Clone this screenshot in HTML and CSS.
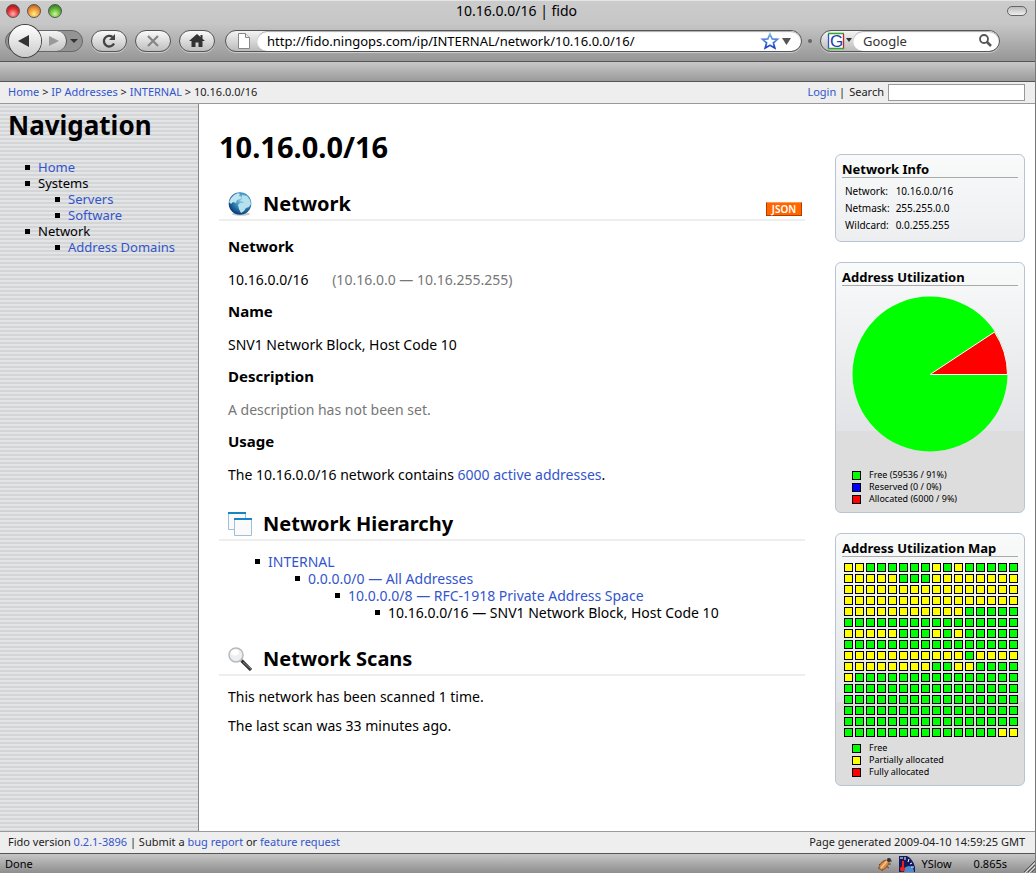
FILE: index.html
```html
<!DOCTYPE html>
<html lang="en">
<head>
<meta charset="utf-8">
<title>10.16.0.0/16 | fido</title>
<link rel="stylesheet" href="styles.css">
</head>
<body>
<div class="window">
  <header class="chrome">
    <div class="titlebar">
      <div class="lights">
        <button class="light red" aria-label="Close"></button>
        <button class="light amber" aria-label="Minimise"></button>
        <button class="light green" aria-label="Zoom"></button>
      </div>
      <span class="title">10.16.0.0/16 | fido</span>
      <div class="corner"><button class="pill" aria-label="Toggle toolbar"></button></div>
    </div>
    <div class="toolbar">
      <div class="history">
        <button class="back" aria-label="Back"><svg width="32" height="32" viewBox="0 0 32 32"><path d="M9 16 20 10V22Z" fill="#333"/></svg></button>
        <button class="forward" aria-label="Forward"><svg width="28" height="20" viewBox="0 0 28 20"><path d="M11 5V15L21 10Z" fill="#999"/></svg></button>
        <button class="recent" aria-label="Recent pages"><svg width="15" height="20" viewBox="0 0 15 20"><path d="M3 8H11L7 12Z" fill="#333"/></svg></button>
      </div>
      <button class="tool" aria-label="Reload"><svg width="34" height="20" viewBox="0 0 34 20"><path d="M22 12.500A5.300 5.300 0 1 1 20.500 6" fill="none" stroke="#444" stroke-width="2.300"/><path d="M23 3V9H17Z" fill="#444"/></svg></button>
      <button class="tool" aria-label="Stop"><svg width="34" height="20" viewBox="0 0 34 20"><path d="M12 5 22 15M22 5 12 15" fill="none" stroke="#858585" stroke-width="2.200"/></svg></button>
      <button class="tool" aria-label="Home page"><svg width="34" height="20" viewBox="0 0 34 20"><path d="M17 3 9 10H11.500V16H15.500V11.500H18.500V16H22.500V10H25L22.500 7.800V4H20.500V6Z" fill="#333"/></svg></button>
      <div class="address">
        <svg width="31" height="20" viewBox="0 0 31 20"><path d="M12.500 2.500H19.500L23.500 6.500V17.500H12.500Z" fill="#fff" stroke="#888"/><path d="M19.500 2.500V6.500H23.500" fill="#eee" stroke="#888"/></svg>
        <div class="field">
          <input aria-label="Address" value="http://fido.ningops.com/ip/INTERNAL/network/10.16.0.0/16/">
          <svg width="44" height="20" viewBox="0 0 44 20"><defs><linearGradient id="st" x2="0" y2="1"><stop stop-color="#7db4ec"/><stop offset="1" stop-color="#1742c8"/></linearGradient></defs><path d="M13 3 15.200 7.900 20.500 8.300 16.400 11.800 17.800 17 13 14.200 8.200 17 9.600 11.800 5.500 8.300 10.800 7.900Z" fill="#fff" stroke="url(#st)" stroke-width="1.700"/><path d="M25 7H34L29.500 14Z" fill="#555"/></svg>
        </div>
      </div>
      <span class="grip"></span>
      <div class="address search">
        <svg width="32" height="20" viewBox="0 0 32 20"><path d="M8 3H22V18H8Z" fill="#fff"/><path d="M7 2.500H23" stroke="#30a828" stroke-width="1.300"/><path d="M7.500 3V18" stroke="#2855d5" stroke-width="1.300"/><path d="M22.500 3V18" stroke="#c22" stroke-width="1.300"/><path d="M7 17.500H23" stroke="#30a828" stroke-width="1.300"/><text x="9" y="16" class="g-mark">G</text><path d="M25 7H31L28 11Z" fill="#333"/></svg>
        <div class="field">
          <input aria-label="Web search" value="Google">
          <svg width="24" height="20" viewBox="0 0 24 20"><circle cx="9" cy="8" r="4" fill="none" stroke="#555" stroke-width="1.800"/><path d="M12 11 16 15" stroke="#555" stroke-width="2.500"/></svg>
        </div>
      </div>
    </div>
    <div class="bookmarks"></div>
  </header>

  <div class="topbar">
    <nav class="crumbs"><a href="#">Home</a> &gt; <a href="#">IP Addresses</a> &gt; <a href="#">INTERNAL</a> &gt; 10.16.0.0/16</nav>
    <form class="find"><span><a href="#">Login</a> |</span><label for="q">Search</label><input id="q" type="text"></form>
  </div>

  <div class="body">
    <nav class="sidebar">
      <h1>Navigation</h1>
      <ul>
        <li><a href="#">Home</a></li>
        <li>Systems<ul><li><a href="#">Servers</a></li><li><a href="#">Software</a></li></ul></li>
        <li>Network<ul><li><a href="#">Address Domains</a></li></ul></li>
      </ul>
    </nav>

    <main>
      <h1>10.16.0.0/16</h1>
      <section>
        <div class="heading">
          <svg width="24" height="24" viewBox="0 0 24 24"><defs><radialGradient id="gl" cx=".6" cy=".35" r=".65"><stop stop-color="#9ed9ed"/><stop offset=".55" stop-color="#3488b8"/><stop offset="1" stop-color="#0b3e78"/></radialGradient></defs><ellipse cx="13" cy="22" rx="9" ry="1.800" fill="#ccc"/><circle cx="12" cy="11.500" r="11.300" fill="url(#gl)"/><path d="M3 6 6 3 10 1 12 2 11 4 14 5 12 7 9 8 8 11 5 10 3 12 1 10Z" fill="#bfe5ee"/><path d="M14 3 19 4 22 8 23 12 21 15 18 16 16 19 13 21 11 17 10 13 12 11 16 11 14 9 12 9 14 7Z" fill="#b5e1ed"/></svg>
          <h2>Network</h2>
          <a class="json" href="#">JSON</a>
        </div>
        <div class="facts">
          <h3>Network</h3>
          <p>10.16.0.0/16 <span class="range">(10.16.0.0 — 10.16.255.255)</span></p>
          <h3>Name</h3>
          <p>SNV1 Network Block, Host Code 10</p>
          <h3>Description</h3>
          <p class="muted">A description has not been set.</p>
          <h3>Usage</h3>
          <p>The 10.16.0.0/16 network contains <a href="#">6000 active addresses</a>.</p>
        </div>
      </section>
      <section>
        <div class="heading">
          <svg width="24" height="24" viewBox="0 0 24 24"><path d="M.5 1V17.500H17.500V1" fill="#fafafa" stroke="#9cc0dc"/><path d="M0 1H18" stroke="#1585c4" stroke-width="2"/><path d="M6.500 7V23.500H23.500V7" fill="#fafafa" stroke="#9cc0dc"/><path d="M6 7H24" stroke="#1585c4" stroke-width="2"/></svg>
          <h2>Network Hierarchy</h2>
        </div>
        <ul class="tree"><li><a href="#">INTERNAL</a>
          <ul><li><a href="#">0.0.0.0/0 — All Addresses</a>
            <ul><li><a href="#">10.0.0.0/8 — RFC-1918 Private Address Space</a>
              <ul><li>10.16.0.0/16 — SNV1 Network Block, Host Code 10</li></ul></li></ul></li></ul></li></ul>
      </section>
      <section>
        <div class="heading">
          <svg width="24" height="24" viewBox="0 0 24 24"><path d="M13.500 13.500 23 23" stroke="#333" stroke-width="3.200"/><path d="M15 15 23 22" stroke="#888"/><circle cx="8" cy="8" r="7" fill="#eceff1" stroke="#b9b9b9" stroke-width="1.500"/><ellipse cx="7" cy="5.500" rx="4" ry="3" fill="#fff"/></svg>
          <h2>Network Scans</h2>
        </div>
        <div class="scans">
          <p>This network has been scanned 1 time.</p>
          <p>The last scan was 33 minutes ago.</p>
        </div>
      </section>
    </main>

    <aside>
      <section class="box">
        <h4>Network Info</h4>
        <table class="info">
          <tr><th>Network:</th><td>10.16.0.0/16</td></tr>
          <tr><th>Netmask:</th><td>255.255.0.0</td></tr>
          <tr><th>Wildcard:</th><td>0.0.255.255</td></tr>
        </table>
      </section>
      <section class="box">
        <h4>Address Utilization</h4>
        <svg class="pie" viewBox="0 0 156 156"><circle cx="78" cy="78" r="77.500" fill="#0f0"/><path d="M78 78.500H155.500A77.500 77.500 0 0 0 142.500 36Z" fill="#f00" stroke="#fff"/></svg>
        <ul class="legend">
          <li><i class="cell"></i>Free (59536 / 91%)</li>
          <li><i class="cell reserved"></i>Reserved (0 / 0%)</li>
          <li><i class="cell full"></i>Allocated (6000 / 9%)</li>
        </ul>
      </section>
      <section class="box">
        <h4>Address Utilization Map</h4>
        <div class="cells" id="cells"></div>
        <ul class="legend">
          <li><i class="cell"></i>Free</li>
          <li><i class="cell partial"></i>Partially allocated</li>
          <li><i class="cell full"></i>Fully allocated</li>
        </ul>
      </section>
    </aside>
  </div>

  <footer class="footer">
    <span>Fido version <a href="#">0.2.1-3896</a> | Submit a <a href="#">bug report</a> or <a href="#">feature request</a></span>
    <span>Page generated 2009-04-10 14:59:25 GMT</span>
  </footer>
  <div class="status">
    <span class="done">Done</span>
    <svg width="16" height="16" viewBox="0 0 16 16"><path d="M2 8 4 10M1 12 5 11M5 15 6 12M7 4 8 6M14 8 11 8M12 12 9 10M11 2 12 4M15 5 12 5" stroke="#543"/><ellipse cx="7" cy="9" rx="6" ry="3.300" transform="rotate(-45 7 9)" fill="#d98b48" stroke="#975322"/><path d="M4 12 10 5" stroke="#f7c792" stroke-width="1.500"/><circle cx="12" cy="4" r="2" fill="#333"/></svg>
    <svg width="16" height="16" viewBox="0 0 16 16"><path d="M0 0H8Q14 3 16 11V16H0Z" fill="#151a60"/><path d="M5 16Q5 10 10 10T15 16Z" fill="#4b8dd0"/><path d="M1 2H4M6 1V4M10 3 9 6M13 7 11 8M15 11 12 11" stroke="#fff"/><path d="M4 5 4 13" stroke="#e21" stroke-width="2"/><circle cx="3.500" cy="13" r="2.500" fill="#e21"/></svg>
    <span>YSlow</span>
    <span class="timing">0.865s</span>
    <svg width="12" height="18" viewBox="0 0 12 18"><path d="M1 17 12 6M5 17 12 10M9 17 12 14" stroke="#555"/><path d="M2 18 12 8M6 18 12 12" stroke="#ddd"/></svg>
  </div>
</div>
<script src="map.js"></script>
</body>
</html>
```
FILE: map.js
```js
// y = partially allocated, g = free; one string per row of blocks
const rows = [
  'yyggggggygyggggg',
  'yyyyygggyyyyyyyy',
  'yyyyyyyyyyyyyyyy',
  'yyyyyyyyyyyyyyyy',
  'yyyyyyyyyyyggggg',
  'gggggggggggggggg',
  'yyyyygggygyggggg',
  'gggggggggggggggg',
  'yyyyyyyyyyygyyyy',
  'yyyyyyyyggyygggg',
  'yggggggggggggggg',
  'gggggggggggggggg',
  'gggggggggggggggg',
  'gggggggggggggggg',
  'gggggggggggggggg',
  'ggggggggggggggyy'
];
const cells = document.getElementById('cells');
for (const state of rows.join('')) {
  const cell = document.createElement('i');
  cell.className = state === 'y' ? 'cell partial' : 'cell';
  cells.append(cell);
}
```
FILE: styles.css
```css
* { box-sizing: border-box; }
body {
  margin: 0;
  font: 13px/16px "Noto Sans", "Open Sans", sans-serif;
  color: #000;
  background: #fff;
}
a { color: #35c; text-decoration: none; }
button { padding: 0; border: 0; background: none; }
input { font: inherit; color: inherit; min-width: 0; }
svg { display: block; flex: none; }
h1, h2, h3, h4, p, ul { margin: 0; }
ul { padding: 0; list-style: none; }

.window {
  display: flex;
  flex-direction: column;
  min-height: 100vh;
  border-right: 1px solid #777;
}

/* Browser chrome */
.chrome { background: linear-gradient(#ccc, #c6c6c6 24px, #969696 61px); box-shadow: inset 0 1px 0 #e4e4e4; }
.titlebar { display: flex; align-items: center; height: 22px; padding: 0 8px 0 6px; }
.lights { display: flex; gap: 7px; flex: 1; }
.light { width: 14px; height: 14px; border-radius: 50%; border: 1px solid #555; }
.red { background: radial-gradient(circle at 50% 75%, #ffb0b0, #e22c30 50%, #8a0c10); }
.amber { background: radial-gradient(circle at 50% 75%, #fff080, #f0953a 50%, #9a4c10); }
.green { background: radial-gradient(circle at 50% 75%, #d0f890, #5db53c 50%, #246010); }
.title { font-size: 14px; }
.corner { display: flex; flex: 1; justify-content: flex-end; }
.pill { width: 20px; height: 10px; border: 1px solid #666; border-radius: 5px; background: linear-gradient(#bbb, #eee); }

.toolbar { display: flex; align-items: center; height: 39px; padding: 0 35px 2px 5px; }
.history {
  display: flex; align-items: center; height: 22px; margin-right: 8px;
  border: 1px solid #666; border-radius: 11px; background: #949494;
}
.back {
  width: 32px; height: 32px; margin-left: 3px; border-radius: 50%; z-index: 1;
  background: linear-gradient(#fff, #ccc); box-shadow: 0 0 0 1px #444;
}
.forward { height: 20px; margin-left: -3px; border-right: 1px solid #555; border-radius: 0 10px 10px 0; background: linear-gradient(#f4f4f4, #c4c4c4); }
.tool {
  height: 22px; margin-right: 8px; border: 1px solid #555; border-radius: 11px;
  background: linear-gradient(#fafafa, #bebebe); box-shadow: 0 1px 0 #ccc;
}
.address {
  display: flex; flex: 1; height: 22px; margin-left: 2px; overflow: hidden;
  border: 1px solid #555; border-radius: 11px; background: linear-gradient(#f4f4f4, #bbb);
  box-shadow: 0 1px 0 #ccc;
}
.field { display: flex; flex: 1; min-width: 0; border-radius: 10px; background: #fff; box-shadow: inset 0 1px 1px #aaa; }
.field input { flex: 1; width: 0; padding: 0 0 0 10px; border: 0; background: none; outline: 0; }
.search { flex: 0 0 180px; margin-left: 8px; color: #333; }
.g-mark { font: 17px "Liberation Sans", sans-serif; fill: #1c3fa8; }
.grip { width: 4px; height: 4px; margin-left: 6px; border-radius: 50%; background: #666; }
.bookmarks { height: 21px; border-top: 1px solid #555; border-bottom: 1px solid #555; background: linear-gradient(#c8c8c8, #9a9a9a); }

/* Page header and footer */
.topbar, .footer {
  display: flex; justify-content: space-between; align-items: center;
  height: 22px; padding: 0 10px 1px 8px; background: #eee; font-size: 11px; color: #222;
}
.topbar { border-bottom: 1px solid #999; }
.footer { border-top: 1px solid #999; }
.find { display: flex; align-items: center; gap: 4px; }
.find input { width: 137px; height: 17px; border: 1px solid #999; background: #fff; }

/* Columns */
.body { display: flex; flex: 1; }
.sidebar {
  flex: none; width: 199px; padding: 3px 8px 4px; border-right: 1px solid #888;
  background: repeating-linear-gradient(#e2e4e6 0 2px, #d3d5d7 2px 4px);
}
.sidebar h1 { font-size: 26px; line-height: 36px; margin-bottom: 16px; }
.sidebar ul { padding-left: 30px; }

/* Square list bullets, hung in the indent */
.sidebar li, .tree li { position: relative; }
.sidebar li::before, .tree li::before {
  content: ""; position: absolute; left: -13px; top: 6px;
  width: 5px; height: 5px; background: #000;
}

main { flex: 1; min-width: 0; padding: 25px 30px 20px 20px; font-size: 14px; }
main > h1 { font-size: 29px; line-height: 36px; margin-bottom: 27px; }
.heading { display: flex; align-items: center; gap: 11px; height: 29px; padding: 0 3px 3px 9px; border-bottom: 2px solid #eee; }
.heading h2 { flex: 1; font-size: 20px; line-height: 24px; }
.json {
  align-self: flex-end; width: 36px; border: 1px solid #b43b00; border-top-color: #ff9a55; background: #f60;
  color: #fff; font-size: 10px; font-weight: 600; line-height: 12px; text-align: center;
}
.facts { padding: 15px 9px 29px; }
.facts h3 { font-size: 15px; line-height: 20px; margin-bottom: 16px; }
.facts p { margin-bottom: 13px; }
.facts p:last-child { margin: 0; }
.range { margin-left: 20px; color: #777; }
.muted { color: #777; }
.tree { padding: 12px 0 26px 49px; line-height: 17px; }
.tree ul { padding-left: 40px; }
.scans { padding: 13px 9px; }
.scans p { margin-bottom: 13px; }

/* Side boxes */
aside { flex: none; width: 200px; padding: 50px 10px 0 0; }
.box {
  margin-bottom: 20px; padding: 6px; border: 1px solid #b8c4d4; border-radius: 6px;
  background: linear-gradient(#f9fafa, #e2e3e6 168px, #ddd 168px);
}
.box h4 { font-size: 13px; line-height: 16px; border-bottom: 1px solid #aaa; }
.info { margin: 5px 0 1px; border-collapse: collapse; font-size: 10px; line-height: 17px; }
.info th { padding: 0 3px; font-weight: 400; text-align: left; }
.info td { padding: 0 3px; }
.pie { width: 156px; margin: 10px 10px 17px; }
.legend { padding: 0 0 1px 10px; font-size: 9px; line-height: 12px; }
.legend li { display: flex; align-items: center; gap: 8px; }
.cell { width: 9px; height: 9px; border: 1px solid #000; background: #0f0; }
.partial { background: #ff0; }
.full { background: #f00; }
.reserved { background: #00f; }
.cells { display: grid; grid-template-columns: repeat(16, 9px); gap: 2px; padding: 6px 2px 5px; }

/* Status bar */
.status {
  display: flex; align-items: center; gap: 6px; height: 20px; padding-left: 5px;
  border-top: 1px solid #555; background: linear-gradient(#c6c6c6, #8e8e8e); font-size: 11px;
}
.done { flex: 1; }
.timing { margin: 0 10px 0 16px; }
```
